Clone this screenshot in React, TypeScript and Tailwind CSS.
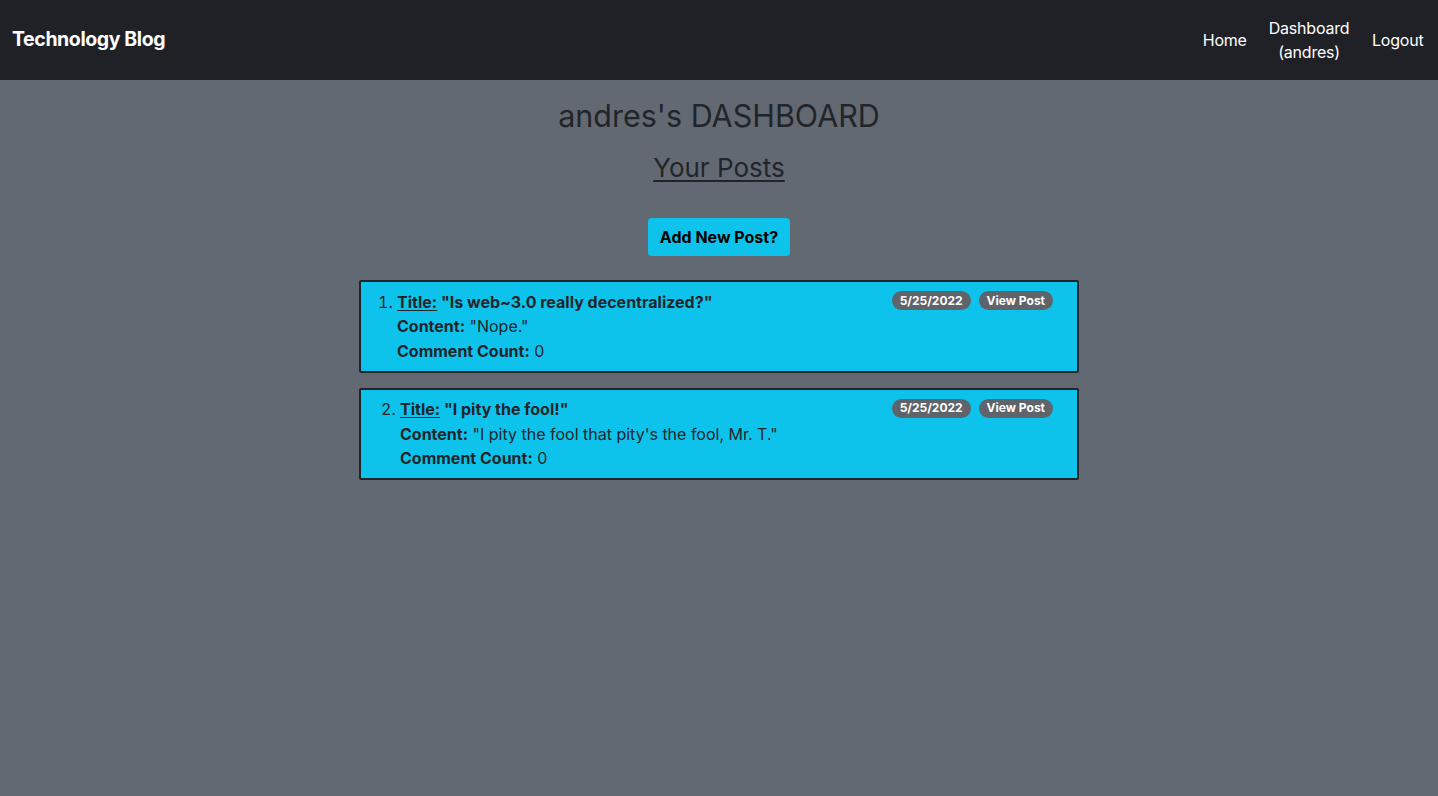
const posts = [
  {
    title: '"Is web~3.0 really decentralized?"',
    content: '"Nope."',
    count: 0,
    date: '5/25/2022',
  },
  {
    title: '"I pity the fool!"',
    content: '"I pity the fool that pity\'s the fool, Mr. T."',
    count: 0,
    date: '5/25/2022',
  },
];

const App = () => {
  return (
    <div className="min-h-[796px] bg-[#636973] font-['Inter',sans-serif] text-[#212529]">
      <nav className="h-20 bg-[#1f2126] flex items-center justify-between pl-3 pr-[3px]">
        <a className="text-white font-bold text-[19.5px] tracking-[-0.4px]">Technology Blog</a>
        <ul className="flex items-center text-white text-base tracking-[-0.2px]">
          <li className="px-[11px]">Home</li>
          <li className="px-[11px] text-center leading-6">
            Dashboard
            <br />
            (andres)
          </li>
          <li className="px-[11.5px]">Logout</li>
        </ul>
      </nav>

      <main className="flex flex-col items-center">
        <h1 className="text-[30.5px] leading-[38px] mt-[17px] font-normal">andres's DASHBOARD</h1>
        <h2 className="text-[26px] leading-[31px] mt-[17px] underline underline-offset-[3px] decoration-[1.5px]">Your Posts</h2>
        <button className="mt-[35px] bg-[#0dc3ec] text-black font-bold text-base px-3 h-[38px] rounded-[4px]">
          Add New Post?
        </button>

        <div className="mt-[24px] w-[720px] flex flex-col gap-[15px]">
          {posts.map((p, i) => (
            <div key={i} className="relative border-2 border-[#212529] bg-[#0dc3ec] rounded-[2px] px-4 py-[7.5px]">
              <ol start={i + 1} className={`list-decimal text-base leading-[24.5px] ${i === 0 ? 'pl-[20px]' : 'pl-[23px]'}`}>
                <li>
                  <span className="font-bold">
                    <span className="underline underline-offset-2">Title:</span> {p.title}
                  </span>
                  <div>
                    <span className="font-bold">Content:</span> {p.content}
                  </div>
                  <div>
                    <span className="font-bold">Comment Count:</span> {p.count}
                  </div>
                </li>
              </ol>
              <div className="absolute top-[9px] right-[24px] flex gap-2">
                <span className="bg-[#5f646b] text-white text-xs font-bold rounded-full px-[8px] h-[19px] flex items-center">
                  {p.date}
                </span>
                <span className="bg-[#5f646b] text-white text-xs font-bold rounded-full px-[8px] h-[19px] flex items-center">
                  View Post
                </span>
              </div>
            </div>
          ))}
        </div>
      </main>
    </div>
  );
};

export default App;
